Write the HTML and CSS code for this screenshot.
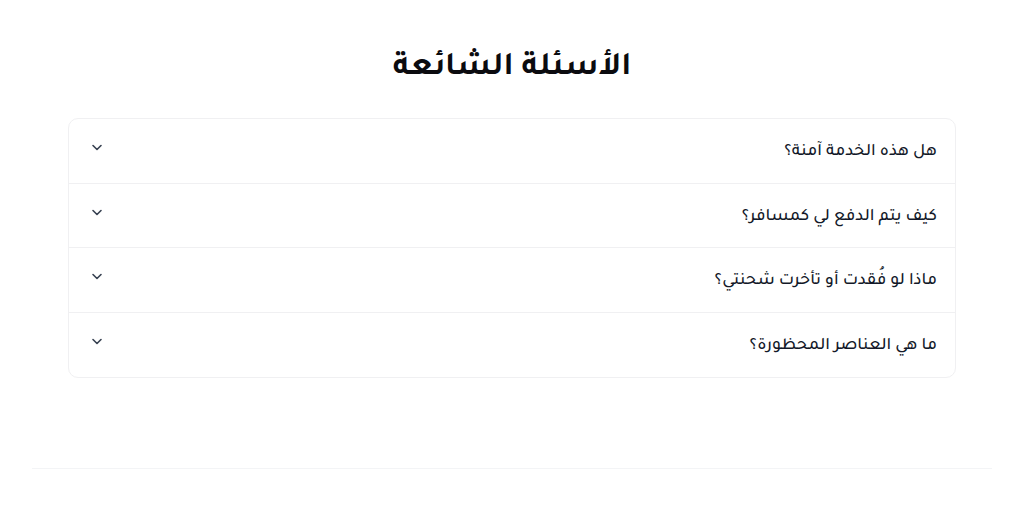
FILE: index.html
```html
<!DOCTYPE html>
<html lang="ar" dir="rtl">
<head>
<meta charset="utf-8">
<link rel="stylesheet" href="styles.css">
</head>
<body>
<section class="faq">
  <h2 class="faq-title">الأسئلة الشائعة</h2>
  <div class="faq-card">
    <div class="faq-row"><span class="q">هل هذه الخدمة آمنة؟</span><svg class="chev" viewBox="0 0 12 12"><path d="M2 4.5l4 4 4-4"/></svg></div>
    <div class="faq-row"><span class="q">كيف يتم الدفع لي كمسافر؟</span><svg class="chev" viewBox="0 0 12 12"><path d="M2 4.5l4 4 4-4"/></svg></div>
    <div class="faq-row"><span class="q">ماذا لو فُقدت أو تأخرت شحنتي؟</span><svg class="chev" viewBox="0 0 12 12"><path d="M2 4.5l4 4 4-4"/></svg></div>
    <div class="faq-row"><span class="q">ما هي العناصر المحظورة؟</span><svg class="chev" viewBox="0 0 12 12"><path d="M2 4.5l4 4 4-4"/></svg></div>
  </div>
</section>
<footer class="footer"></footer>
</body>
</html>
```

FILE: styles.css
```css
* { box-sizing: border-box; }
body {
  margin: 0;
  background: #fff;
  font-family: Tajawal, Cairo, "Noto Sans", sans-serif;
  color: #111827;
}
.faq {
  padding-top: 48px;
  display: flex;
  flex-direction: column;
  align-items: center;
}
.faq-title {
  margin: 0 0 26px;
  font-size: 33px;
  font-weight: 700;
  line-height: 44px;
  color: #0b0b0f;
}
.faq-card {
  width: 888px;
  border: 1px solid #f0f0f2;
  border-radius: 10px;
  background: #fff;
}
.faq-row {
  height: 64.5px;
  display: flex;
  align-items: center;
  justify-content: space-between;
  padding: 0 18px 0 22px;
  border-bottom: 1px solid #f0f0f2;
}
.faq-row:last-child { border-bottom: none; }
.q {
  font-size: 17.5px;
  font-weight: 500;
  color: #131929;
  padding-top: 4px;
}
.chev {
  width: 12px;
  height: 12px;
  margin-top: -7px;
  fill: none;
  stroke: #374151;
  stroke-width: 1.6;
  stroke-linecap: round;
  stroke-linejoin: round;
}
.footer {
  margin: 90px 32px 0;
  border-top: 1px solid #f3f4f6;
  height: 38px;
}
```
